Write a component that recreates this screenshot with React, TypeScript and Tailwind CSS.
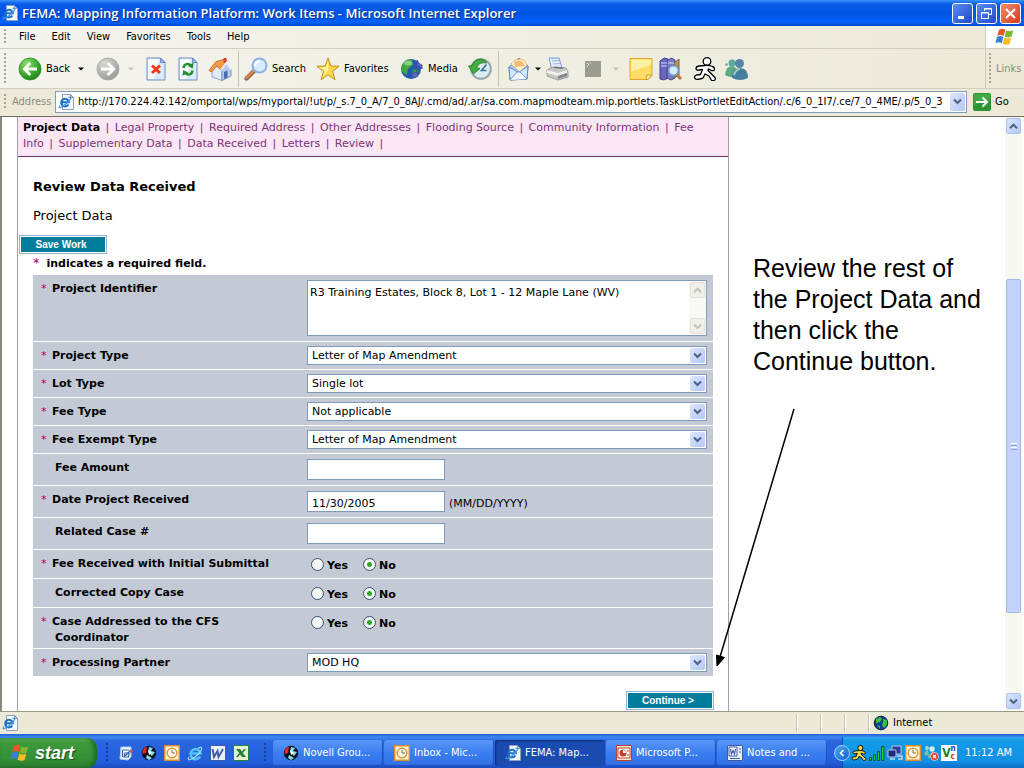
import React from "react";

const tahoma = "font-['DejaVu_Sans_Condensed','DejaVu_Sans',sans-serif]";

type IconProps = { className?: string };

function Chevron({ className = "", up = false, color = "#4d6185" }: { className?: string; up?: boolean; color?: string }) {
  return (
    <svg viewBox="0 0 9 7" className={`h-[7px] w-[9px] ${className}`} aria-hidden="true">
      <path d={up ? "M1 5.2 4.5 1.7 8 5.2" : "M1 1.5 4.5 5 8 1.5"} fill="none" stroke={color} strokeWidth="2" />
    </svg>
  );
}

function Grip({ className = "h-4" }: IconProps) {
  return <span className={`w-[2px] shrink-0 bg-[repeating-linear-gradient(#a5a392_0_2px,transparent_2px_4px)] ${className}`} />;
}

function IePage({ className = "h-4 w-4" }: IconProps) {
  return (
    <svg viewBox="0 0 16 16" className={`shrink-0 ${className}`} aria-hidden="true">
      <path d="M4.5.5h8l3 3v12h-11z" fill="#f4f8fd" stroke="#8fa0b8" />
      <path d="M12.500.5v3h3z" fill="#b9c9e4" stroke="#6482b0" strokeWidth=".7" />
      <path d="M10.300 10.500A3.800 3.800 0 1 1 10.800 8.200H4" fill="none" stroke="#1c6fc0" strokeWidth="2" />
      <path d="M2 11.500C-1.500 16 5 13 9 9s5.500-7 1.500-5.500" fill="none" stroke="#3b98e0" strokeWidth="1.200" />
    </svg>
  );
}

function IeLogo({ className = "h-4 w-4" }: IconProps) {
  return (
    <svg viewBox="0 0 16 16" className={`shrink-0 ${className}`} aria-hidden="true">
      <path d="M13 11.500A5 5 0 1 1 13.500 8.500H4" fill="none" stroke="#55c0f7" strokeWidth="2.600" />
      <path d="M2 12c-3 5 4 2.500 9-2.500s5-9 0-6" fill="none" stroke="#9fe0ff" strokeWidth="1.200" />
    </svg>
  );
}

function WindowsFlag({ className = "h-5 w-5" }: IconProps) {
  return (
    <svg viewBox="0 0 20 18" className={`shrink-0 ${className}`} aria-hidden="true">
      <path d="M4 1.800Q7.500-.3 10.300 1.800L8.700 8Q5.500 6 2.300 7.900z" fill="#e8562a" />
      <path d="M11.200 2.300Q14.500 4.300 18.300 2.300L16.600 8.600Q13 10.500 9.600 8.500z" fill="#78b832" />
      <path d="M2 8.900Q5.300 7 8.400 9L6.800 15.200Q3.500 13.200.4 15.200z" fill="#3c7fd8" />
      <path d="M9.300 9.500Q12.700 11.500 16.300 9.600L14.600 16Q11 17.800 7.700 15.800z" fill="#f6bd22" />
    </svg>
  );
}

function RoundArrow({ kind }: { kind: "back" | "forward" }) {
  const back = kind === "back";
  return (
    <svg viewBox="0 0 24 24" className="h-6 w-6 shrink-0" aria-hidden="true">
      <defs>
        <radialGradient id={`round-${kind}`} cx=".35" cy=".25" r=".85">
          <stop offset="0" stopColor={back ? "#8ade70" : "#d8d8d4"} />
          <stop offset=".55" stopColor={back ? "#3fac31" : "#b4b4b1"} />
          <stop offset="1" stopColor={back ? "#1c7a16" : "#949492"} />
        </radialGradient>
      </defs>
      <circle cx="12" cy="12" r="11" fill={`url(#round-${kind})`} stroke={back ? "#2d8a25" : "#a3a3a0"} strokeWidth=".8" />
      <path
        d={back ? "M19 12H7M12.300 6 6.300 12l6 6" : "M5 12h12M11.700 6l6 6-6 6"}
        fill="none" stroke="#fff" strokeWidth="2.800"
      />
    </svg>
  );
}

function PageIcon({ kind }: { kind: "stop" | "refresh" }) {
  return (
    <svg viewBox="0 0 20 24" className="h-6 w-5 shrink-0" aria-hidden="true">
      <path d="M1 1h13.500L19 5.500V23H1z" fill="#dce8fb" stroke="#6f8fc8" />
      <path d="M2 2h11l-5 20H2z" fill="#f7faff" />
      <path d="M14.500 1v4.500H19z" fill="#9cb6e2" stroke="#5575b0" strokeWidth=".7" />
      {kind === "stop" ? (
        <path d="m6 8.500 8 7.500m0-7.500L6 16" stroke="#ee3a18" strokeWidth="3" />
      ) : (
        <g fill="none" stroke="#20902c" strokeWidth="2.400">
          <path d="M5.500 11c.5-4.500 5-5 7.200-2.500" />
          <path d="M14.500 13.500c-.5 4.500-5 5-7.200 2.500" />
          <path d="m15.500 5.500-.6 6-5-2.500z M4.500 19l.6-6 5 2.500z" fill="#20902c" stroke="none" />
        </g>
      )}
    </svg>
  );
}

function HomeIcon() {
  return (
    <svg viewBox="0 0 24 24" className="h-6 w-6 shrink-0" aria-hidden="true">
      <path d="M4 13v7l10 3.500V12L8 6z" fill="#dfe9f8" stroke="#7b96c4" strokeWidth=".8" />
      <path d="M14 13 18.500 6l4.500 6.500V19l-9 4.500z" fill="#b7cbec" stroke="#6481b5" strokeWidth=".8" />
      <path d="M1 13.500 8 4.500l10-2.500 1 3-6 8-4-4-5.500 6z" fill="#f49a45" stroke="#c0611d" strokeWidth=".8" />
      <path d="M15.500 1h3v5h-3z" fill="#d64b2c" />
      <path d="m16 15 3.500-1.500v7L16 22z" fill="#4a69a8" />
      <path d="m13 13.500 5.500-8 4.800 7" fill="none" stroke="#edf3fc" strokeWidth="1.800" />
    </svg>
  );
}

function SearchIcon() {
  return (
    <svg viewBox="0 0 24 24" className="h-6 w-6 shrink-0" aria-hidden="true">
      <path d="m2.500 21.500 8-8" stroke="#8a5a3c" strokeWidth="4.200" strokeLinecap="round" />
      <path d="m2.500 21 8-8" stroke="#d98b57" strokeWidth="2.400" strokeLinecap="round" />
      <circle cx="15.500" cy="8.500" r="7" fill="#d5ebff" stroke="#8fb0e4" strokeWidth="2" />
      <path d="M11 9q0-5 5-5" fill="none" stroke="#fff" strokeWidth="2" />
    </svg>
  );
}

function StarIcon() {
  return (
    <svg viewBox="0 0 24 24" className="h-6 w-6 shrink-0" aria-hidden="true">
      <path d="m12 1 2.800 8 8.400.3-6.700 5 2.500 8.400-7-4.800-7 4.800 2.500-8.400-6.700-5L9.200 9z" fill="#fcd94d" stroke="#c58e18" strokeLinejoin="round" />
      <path d="m12 3-2 7-7 .5L9 14l-2 6 5-7z" fill="#fff3a4" />
    </svg>
  );
}

function MediaIcon() {
  return (
    <svg viewBox="0 0 24 24" className="h-6 w-6 shrink-0" aria-hidden="true">
      <circle cx="11" cy="12" r="10" fill="#2458b4" />
      <path d="M2 8Q6 1 12 3l1 5-5 4-1 6Q1 16 1.500 10z" fill="#3faa39" />
      <path d="M12 13q5-3 7 1-1 6-6 7z" fill="#2f9060" />
      <ellipse cx="8" cy="6" rx="4" ry="2.500" fill="#b4e8bb" opacity=".6" />
      <path d="M17 17V3q1 4 5 5v4q-2-3-4-3" fill="#686cc8" stroke="#3b3e96" strokeWidth=".8" />
      <ellipse cx="15" cy="18" rx="3" ry="2.300" fill="#686cc8" stroke="#3b3e96" strokeWidth=".6" />
    </svg>
  );
}

function HistoryIcon() {
  return (
    <svg viewBox="0 0 24 24" className="h-6 w-6 shrink-0" aria-hidden="true">
      <circle cx="13" cy="12" r="9.800" fill="#dcebf2" stroke="#98a7ae" strokeWidth="2" />
      <path d="M17 3.500Q8-1 4 8.500L.5 9 5.500 17l6.500-5.500-3.500-1Q11 4.500 19 6z" fill="#41ad3e" stroke="#24772a" strokeWidth=".8" />
      <path d="m18.500 7.500-5 6h5" fill="none" stroke="#39749d" strokeWidth="1.700" />
    </svg>
  );
}

function MailIcon() {
  return (
    <svg viewBox="0 0 24 24" className="h-6 w-6 shrink-0" aria-hidden="true">
      <path d="M2 10 12 1l9 8-1 13-17 1z" fill="#a7c6f0" stroke="#6487c5" />
      <path d="m4 7 4-4q6-2 9 0l3 5-7 7z" fill="#fff1d5" stroke="#dfa95a" strokeWidth=".8" />
      <path d="M7 5q5-3 9 0l2 4-10 1z" fill="#f4bd76" />
      <path d="m2 10 9.500 5.500L21 9l-1 13-17 1z" fill="#d5e7fd" stroke="#6487c5" />
      <path d="m3 23 7-8 3 0 7 7" fill="#eff6ff" stroke="#7998d0" />
    </svg>
  );
}

function PrinterIcon() {
  return (
    <svg viewBox="0 0 24 24" className="h-6 w-6 shrink-0" aria-hidden="true">
      <path d="M4 1h10l3 10-10 2z" fill="#e2eefd" stroke="#7699d2" />
      <path d="m7 4 7-.5M8 7l7-.5" stroke="#9bb4dc" />
      <path d="m2 13 6-3 13 1 2 4v5l-10 3-11-4z" fill="#c7c7c4" stroke="#9a9a9a" />
      <path d="m2 13 11 3 9-3v3l-9 3-11-3z" fill="#efefed" />
      <path d="m8 11 9 1 2-1.500-9-1z" fill="#72777e" />
      <path d="m13 19 9-3v3l-9 3z" fill="#83858a" />
    </svg>
  );
}

function DiscussIcon() {
  return (
    <svg viewBox="0 0 16 16" className="h-4 w-4 shrink-0" aria-hidden="true">
      <path d="M0 0h16v16H0z" fill="#9b9c90" />
      <path d="m2 2 2 2m1-2h1m-4 3h1" stroke="#fff" />
    </svg>
  );
}

function NoteIcon() {
  return (
    <svg viewBox="0 0 24 24" className="h-6 w-6 shrink-0" aria-hidden="true">
      <path d="M1 1.500h22v17l-4 4H1z" fill="#ffdc63" stroke="#e5a62c" />
      <path d="M2 2.500h20v5L2 15z" fill="#fff1a3" />
      <path d="M23 18h-5l-1 4.500h2z" fill="#fff2ae" stroke="#d79729" />
    </svg>
  );
}

function ResearchIcon() {
  return (
    <svg viewBox="0 0 24 24" className="h-6 w-6 shrink-0" aria-hidden="true">
      <path d="m1 4 4-3 4 1v19l-4 2-4-1z" fill="#6667bd" stroke="#40428c" />
      <path d="m8 4 4-3 4 2v18l-4 2-4-2z" fill="#7b7ccb" stroke="#40428c" />
      <path d="m15 6 5-4v16l-5 3z" fill="#b7935a" stroke="#7b6242" />
      <path d="M2 6h6m1 0h6M2 9h6" stroke="#d2d5f3" />
      <path d="m17 17 5 5" stroke="#b8783f" strokeWidth="3" />
      <circle cx="14.500" cy="13.500" r="4.800" fill="#d4ecff" stroke="#6e9cca" strokeWidth="1.500" />
    </svg>
  );
}

function RunningMan({ fill = "#fff", className = "h-6 w-6" }: { fill?: string; className?: string }) {
  return (
    <svg viewBox="0 0 24 24" className={`shrink-0 ${className}`} aria-hidden="true">
      <circle cx="14" cy="4.500" r="3.800" fill={fill} stroke="#000" strokeWidth="1.300" />
      <path
        d="M11.500 8.500 6 9q-3 .5-3 2.500t3 1.500l3.500-.5-2 5-4 .5q-3 1-1.500 3.500 1 1 3 .8L9 21.500q1-.3 1.500-1.500l1.500-3 4 2 2 3.500q1 1.800 3 1t1-3L18.500 17 15 13.500l.5-1.500 3 1.500q3 .5 3-1.500t-2-2.500l-3-1Q14 8 11.500 8.500z"
        fill={fill} stroke="#000" strokeWidth="1.300" strokeLinejoin="round"
      />
    </svg>
  );
}

function PeopleIcon({ className = "h-6 w-6" }: IconProps) {
  return (
    <svg viewBox="0 0 24 24" className={`shrink-0 ${className}`} aria-hidden="true">
      <circle cx="8" cy="6" r="3.500" fill="#60a89f" />
      <path d="M1 18q1-9 7-9 5 0 6 9-7 4-13 0z" fill="#5eaa83" />
      <circle cx="15.500" cy="6.500" r="4.500" fill="#5388a7" />
      <path d="M8 21q0-10 8-10t8 10q-8 4-16 0z" fill="#467f9e" />
      <path d="M10 18q2-6 6-6" fill="none" stroke="#a1d1be" strokeWidth="2" />
      <circle cx="2.500" cy="7.500" r="1.500" fill="#77b9aa" />
    </svg>
  );
}

function GlobeIcon({ red = false }: { red?: boolean }) {
  return (
    <svg viewBox="0 0 16 16" className="h-4 w-4 shrink-0" aria-hidden="true">
      <circle cx="8" cy="8" r="6.800" fill={red ? "#101018" : "#153b9b"} stroke="#071c38" />
      {red ? (
        <g>
          <path d="M1.500 9Q1 3 6 1.500L5 8z" fill="#ed2424" />
          <path d="m8 2 4 1-2 3 4 1-3 4-4-4zM6 10l5 3-3 2-3-2z" fill="#87dce8" />
          <path d="m7 5 4 3-3 2z" fill="#fff" />
        </g>
      ) : (
        <path d="m3 4 4-2 2 2-2 3-4 1zM10 4l4 1v5l-3 3-2-3 1-3zM4 10l3 1v3z" fill="#39bf3c" />
      )}
    </svg>
  );
}

function OutlookIcon() {
  return (
    <svg viewBox="0 0 16 16" className="h-4 w-4 shrink-0" aria-hidden="true">
      <path d="M.7.700h14.600v14.600H.700z" fill="#fff6dc" stroke="#df8d28" strokeWidth="1.500" />
      <circle cx="8" cy="8" r="4.800" fill="#fffaf0" stroke="#d79a36" strokeWidth="1.500" />
      <path d="M8 5v3h3" fill="none" stroke="#8d642d" />
    </svg>
  );
}

function OfficeIcon({ kind }: { kind: "word" | "excel" | "ppt" | "doc" }) {
  const color = kind === "excel" ? "#278135" : kind === "ppt" ? "#bd3f28" : "#3f59ac";
  return (
    <svg viewBox="0 0 16 16" className="h-4 w-4 shrink-0" aria-hidden="true">
      <path d="M.5.5h15v15H.5z" fill={kind === "excel" ? "#e3f0d4" : kind === "ppt" ? "#f9e4d8" : "#e9f0fb"} stroke={color} />
      {kind === "excel" && <path d="M3 4h4l2 2.500L11 4h2L9.800 8l3.200 4H9L7 9.500 5 12H3l3.200-4z" fill={color} />}
      {kind === "word" && <path d="m2.500 4 1.500 8 3.500-6 1 6L13 4" fill="none" stroke={color} strokeWidth="1.900" />}
      {kind === "doc" && (
        <g>
          <path d="M2 2h8v9H2z" fill="#fff" stroke={color} />
          <path d="m3.500 4 1 5L6 5.500 7.500 9l1-5" fill="none" stroke={color} strokeWidth="1.200" />
          <path d="M12 4h2M12 7h2M3 13.500h10" stroke={color} />
        </g>
      )}
      {kind === "ppt" && (
        <g>
          <path d="M2 3h12v10H2z" fill="#fff" stroke={color} />
          <circle cx="7" cy="8" r="3.500" fill={color} />
          <path d="M7 8V5a3 3 0 0 1 3 3z" fill="#fff" />
          <path d="M12 5v2m0 2v2" stroke={color} />
        </g>
      )}
    </svg>
  );
}

function DesktopIcon() {
  return (
    <svg viewBox="0 0 16 16" className="h-4 w-4 shrink-0" aria-hidden="true">
      <path d="m3 2 10 0 0 10-3 3-8-1z" fill="#f2f8ff" stroke="#a9cdf2" />
      <path d="M5 5h6M4.500 5v7M7 8h4l-.5 4H6z" fill="none" stroke="#32659e" strokeWidth="1.200" />
      <path d="m7 11 6-6" stroke="#32659e" strokeWidth="1.200" />
      <path d="m12 5 3.500 1-3 2.500z" fill="#e8502c" />
    </svg>
  );
}

function SignalIcon() {
  return (
    <svg viewBox="0 0 16 16" className="h-4 w-4 shrink-0" aria-hidden="true">
      <path d="M.5 12.500h2v3h-2zM4.500 9.500h2v6h-2zM8.500 6.500h2v9h-2zM12.500 1.500h2.500v14h-2.500z" fill="#29c83a" stroke="#0e5628" />
    </svg>
  );
}

function NetworkIcon() {
  return (
    <svg viewBox="0 0 16 16" className="h-4 w-4 shrink-0" aria-hidden="true">
      <path d="M5 1h9v8H5z" fill="#2b3c9c" stroke="#b6c3e5" />
      <path d="M1 5h8v7H1z" fill="#1d2d7c" stroke="#b6c3e5" />
      <path d="M3 14h5M10 11h5v3h-4" fill="none" stroke="#c8d2ea" strokeWidth="1.500" />
    </svg>
  );
}

function OfflineIcon() {
  return (
    <svg viewBox="0 0 16 16" className="h-4 w-4 shrink-0" aria-hidden="true">
      <circle cx="4" cy="3" r="2" fill="#9edcc8" />
      <circle cx="9" cy="4" r="2.700" fill="#d6f1ec" />
      <path d="M1 10q1-5 4-5l1 6zM5 13q1-6 5-6t4 6z" fill="#78bda7" />
      <circle cx="11.500" cy="11.500" r="4" fill="#e43a22" stroke="#fff" strokeWidth=".6" />
      <path d="m10 10 3 3m0-3-3 3" stroke="#fff" strokeWidth="1.200" />
    </svg>
  );
}

function CaretDown({ muted = false }: { muted?: boolean }) {
  return (
    <svg viewBox="0 0 6 4" className="h-1 w-[6px] shrink-0" aria-hidden="true">
      <path d="M0 .5h6L3 3.500z" fill={muted ? "#c4c2b4" : "#000"} />
    </svg>
  );
}

function ToolButton({ className, label, children, text }: { className: string; label: string; children: React.ReactNode; text?: string }) {
  return (
    <button type="button" aria-label={label} className={`flex shrink-0 items-center gap-1 whitespace-nowrap ${className}`}>
      {children}
      {text}
    </button>
  );
}

function Toolbar() {
  return (
    <div className="flex h-10 shrink-0 items-center border-b border-[#d0cebf] bg-gradient-to-r from-[#f4f4ee] to-[#ece9d8] pl-1">
      <Grip className="mr-3 h-8" />
      <ToolButton label="Back" className="w-[78px]" text="Back">
        <RoundArrow kind="back" />
        <span className="order-last ml-1 flex"><CaretDown /></span>
      </ToolButton>
      <ToolButton label="Forward" className="w-[50px]">
        <RoundArrow kind="forward" />
        <span className="ml-1 flex"><CaretDown muted /></span>
      </ToolButton>
      <ToolButton label="Stop" className="w-8"><PageIcon kind="stop" /></ToolButton>
      <ToolButton label="Refresh" className="w-[30px]"><PageIcon kind="refresh" /></ToolButton>
      <ToolButton label="Home" className="w-[30px]"><HomeIcon /></ToolButton>
      <span className="mr-[5px] h-9 w-px shrink-0 bg-[#c4c2b2]" />
      <ToolButton label="Search" className="w-[72px]" text="Search"><SearchIcon /></ToolButton>
      <ToolButton label="Favorites" className="w-[84px]" text="Favorites"><StarIcon /></ToolButton>
      <ToolButton label="Media" className="w-[68px]" text="Media"><MediaIcon /></ToolButton>
      <ToolButton label="History" className="w-[30px]"><HistoryIcon /></ToolButton>
      <span className="mr-2 h-9 w-px shrink-0 bg-[#c4c2b2]" />
      <ToolButton label="Mail" className="w-[38px]"><MailIcon /><CaretDown /></ToolButton>
      <ToolButton label="Print" className="w-10"><PrinterIcon /></ToolButton>
      <ToolButton label="Discuss" className="w-11">
        <DiscussIcon />
        <span className="ml-2 flex"><CaretDown muted /></span>
      </ToolButton>
      <ToolButton label="Notes" className="w-[30px]"><NoteIcon /></ToolButton>
      <ToolButton label="Research" className="w-[34px]"><ResearchIcon /></ToolButton>
      <ToolButton label="Instant messenger" className="w-[31px]"><RunningMan /></ToolButton>
      <ToolButton label="Contacts" className="w-6"><PeopleIcon /></ToolButton>
      <div className="ml-auto flex h-full w-[39px] items-center gap-[5px] border-l border-[#d0cebf] pl-[3px] text-[#8d8b7e]">
        <Grip className="h-8" />
        <span>Links</span>
      </div>
    </div>
  );
}

const tabs = ["Legal Property", "Required Address", "Other Addresses", "Flooding Source", "Community Information", "Fee Info", "Supplementary Data", "Data Received", "Letters", "Review"];

function Row({ label, required = false, htmlFor, height, top = "pt-[6px]", children }: {
  label: React.ReactNode; required?: boolean; htmlFor?: string; height: string; top?: string; children: React.ReactNode;
}) {
  const Tag = htmlFor ? "label" : "div";
  return (
    <div className={`grid grid-cols-[274px_minmax(0,1fr)] border-b border-white bg-[#c3cad6] last:border-b-0 ${height}`}>
      <Tag htmlFor={htmlFor} className="flex pt-[6px] pl-2 text-[11px] leading-4 font-bold">
        <span className={required ? "w-[11px] shrink-0 font-normal text-[#b4004c]" : "w-[14px] shrink-0"}>{required ? "*" : ""}</span>
        <span>{label}</span>
      </Tag>
      <div className={`pr-[6px] ${top}`}>{children}</div>
    </div>
  );
}

function SelectBox({ id, value }: { id: string; value: string }) {
  return (
    <div className="relative">
      <select id={id} defaultValue={value} className="block h-[19px] w-full appearance-none border border-[#7f9db9] bg-white pr-5 pl-1 text-[11px] leading-4 outline-none">
        <option>{value}</option>
      </select>
      <span className="pointer-events-none absolute top-[2px] right-[2px] flex h-[15px] w-[15px] items-center justify-center rounded-[2px] bg-gradient-to-br from-[#dbe5fe] to-[#b4c8f6]">
        <Chevron />
      </span>
    </div>
  );
}

function TextBox({ id, value = "" }: { id: string; value?: string }) {
  return <input id={id} defaultValue={value} className="h-[21px] w-[138px] border border-[#7f9db9] bg-white px-1 pt-1 text-[11px] leading-4 outline-none" />;
}

function YesNo({ name }: { name: string }) {
  const radio = "m-0 h-[13px] w-[13px] appearance-none rounded-full border border-[#2c5578] bg-[#f7f7f5] checked:bg-[radial-gradient(circle,#2ca62a_0_2px,#f7f7f5_3px)]";
  return (
    <div className="flex gap-[15px] pl-1 text-[11px] leading-4 font-bold">
      <label className="flex items-start gap-[3px]"><input type="radio" name={name} className={radio} /><span>Yes</span></label>
      <label className="flex items-start gap-[3px]"><input type="radio" name={name} defaultChecked className={radio} /><span>No</span></label>
    </div>
  );
}

function ProjectForm() {
  return (
    <form className="mr-[15px] ml-[15px] max-w-[680px]">
      <Row label="Project Identifier" required htmlFor="identifier" height="min-h-[67px]" top="pt-[5px]">
        <div className="flex h-14 border border-[#7f9db9] bg-white">
          <textarea id="identifier" defaultValue="R3 Training Estates, Block 8, Lot 1 - 12 Maple Lane (WV)" className="min-w-0 flex-1 resize-none overflow-hidden px-[2px] pt-1 text-[11px] leading-4 outline-none" />
          <div className="flex w-[17px] flex-col justify-between bg-[#f8f8f5] p-px">
            <span className="flex h-4 items-center justify-center rounded-[2px] border border-[#e3e1d8] bg-[#f1efe8]"><Chevron up color="#c6c4b7" /></span>
            <span className="flex h-4 items-center justify-center rounded-[2px] border border-[#e3e1d8] bg-[#f1efe8]"><Chevron color="#c6c4b7" /></span>
          </div>
        </div>
      </Row>
      <Row label="Project Type" required htmlFor="ptype" height="min-h-7" top="pt-1"><SelectBox id="ptype" value="Letter of Map Amendment" /></Row>
      <Row label="Lot Type" required htmlFor="lot" height="min-h-7" top="pt-1"><SelectBox id="lot" value="Single lot" /></Row>
      <Row label="Fee Type" required htmlFor="fee" height="min-h-7" top="pt-1"><SelectBox id="fee" value="Not applicable" /></Row>
      <Row label="Fee Exempt Type" required htmlFor="exempt" height="min-h-7" top="pt-1"><SelectBox id="exempt" value="Letter of Map Amendment" /></Row>
      <Row label="Fee Amount" htmlFor="amount" height="min-h-8" top="pt-[5px]"><TextBox id="amount" /></Row>
      <Row label="Date Project Received" required htmlFor="date" height="min-h-8" top="pt-[5px]">
        <div className="flex items-start gap-1">
          <TextBox id="date" value="11/30/2005" />
          <span className="pt-[5px] text-[11px] leading-4">(MM/DD/YYYY)</span>
        </div>
      </Row>
      <Row label="Related Case #" htmlFor="related" height="min-h-8" top="pt-[5px]"><TextBox id="related" /></Row>
      <Row label="Fee Received with Initial Submittal" required height="min-h-[29px]" top="pt-2"><YesNo name="received" /></Row>
      <Row label="Corrected Copy Case" height="min-h-[29px]" top="pt-2"><YesNo name="corrected" /></Row>
      <Row label={<>Case Addressed to the CFS<br /><span className="pl-[3px]">Coordinator</span></>} required height="min-h-[41px]" top="pt-2"><YesNo name="cfs" /></Row>
      <Row label="Processing Partner" required htmlFor="partner" height="min-h-[27px]" top="pt-1"><SelectBox id="partner" value="MOD HQ" /></Row>
    </form>
  );
}

function Scrollbar() {
  const btn = "flex h-4 shrink-0 items-center justify-center rounded-[2px] border border-[#b0c4f0] bg-gradient-to-br from-[#d8e3fd] to-[#b5c9f7]";
  return (
    <div className="flex w-[17px] shrink-0 flex-col bg-[#f8f8f3] px-px pt-px pb-[2px]">
      <button type="button" aria-label="Scroll up" className={btn}><Chevron up /></button>
      <span className="flex-[146]" />
      <div className="flex flex-[333] flex-col items-center justify-center gap-px rounded-[2px] border border-[#a3b8ea] bg-[#c3d3fd]">
        <span className="h-px w-[6px] bg-white" />
        <span className="h-px w-[6px] bg-[#8ea8e0]" />
        <span className="h-px w-[6px] bg-white" />
        <span className="h-px w-[6px] bg-[#8ea8e0]" />
      </div>
      <span className="flex-[80]" />
      <button type="button" aria-label="Scroll down" className={btn}><Chevron /></button>
    </div>
  );
}

function TaskButton({ icon, children, active = false }: { icon: React.ReactNode; children: React.ReactNode; active?: boolean }) {
  return (
    <button type="button" className={`flex h-[26px] w-[110px] min-w-0 items-center gap-1 rounded-[3px] pl-[10px] whitespace-nowrap text-white ${active ? "bg-[#1b4bb0] shadow-[inset_1px_1px_2px_#0d2c77]" : "bg-gradient-to-b from-[#5a96f5] via-[#3b7ef0] to-[#3170e4] shadow-[inset_-1px_-1px_1px_#1f50bd]"}`}>
      {icon}
      <span>{children}</span>
    </button>
  );
}

function ActionButton({ children }: { children: React.ReactNode }) {
  return (
    <button type="button" className="flex h-[19px] w-[88px] shrink-0 items-center justify-center border border-[#8fb4d4] bg-[#007d9c] pr-1 font-['Liberation_Sans',sans-serif] text-[10px] leading-4 font-bold text-white shadow-[inset_0_0_0_1px_#fff]">
      {children}
    </button>
  );
}

export default function App() {
  const caption = "flex h-[21px] w-[21px] items-center justify-center rounded-[3px] border border-white";
  return (
    <div className={`flex h-screen flex-col overflow-hidden bg-[#ece9d8] text-[11px] leading-4 text-black ${tahoma}`}>
      <header className="flex h-[26px] shrink-0 items-center bg-[linear-gradient(#3a93ff_0,#0a5be8_4px,#0054e3_14px,#0562fb_22px,#0349cd_26px)] pr-[3px] pl-[2px]">
        <IePage />
        <h1 className="ml-1 flex-1 truncate font-['Open_Sans',sans-serif] text-[13px] leading-5 font-semibold text-white [text-shadow:1px_1px_1px_#0a2f8c]">
          FEMA: Mapping Information Platform: Work Items - Microsoft Internet Explorer
        </h1>
        <div className="flex gap-[3px]">
          <button type="button" aria-label="Minimize" className={`${caption} bg-gradient-to-br from-[#5c8cf4] to-[#1c48c8]`}>
            <svg viewBox="0 0 13 13" className="h-[13px] w-[13px]"><path d="M2 9h6v3H2z" fill="#fff" /></svg>
          </button>
          <button type="button" aria-label="Restore" className={`${caption} bg-gradient-to-br from-[#5c8cf4] to-[#1c48c8]`}>
            <svg viewBox="0 0 13 13" className="h-[13px] w-[13px]" fill="none" stroke="#fff"><path d="M4.500 4V1.500h7v6H9M4.500 2h7M1.500 5.500h7v6h-7zM1.500 6h7" /></svg>
          </button>
          <button type="button" aria-label="Close" className={`${caption} bg-gradient-to-br from-[#ef8a6c] to-[#d03a12]`}>
            <svg viewBox="0 0 13 13" className="h-[13px] w-[13px]"><path d="m2 2 9 9m0-9-9 9" stroke="#fff" strokeWidth="2" /></svg>
          </button>
        </div>
      </header>

      <nav className="flex h-[23px] shrink-0 items-center border-b border-[#d0cebf] bg-gradient-to-r from-[#f4f4ee] to-[#ece9d8] pl-1">
        <Grip className="mr-[13px] h-4" />
        <div className="flex gap-4">
          {["File", "Edit", "View", "Favorites", "Tools", "Help"].map((item) => (
            <button type="button" key={item}>{item}</button>
          ))}
        </div>
        <div className="ml-auto flex h-full w-[39px] items-center justify-center border-l border-[#d0cebf] bg-white">
          <WindowsFlag className="h-[18px] w-5" />
        </div>
      </nav>

      <Toolbar />

      <div className="flex h-7 shrink-0 items-center border-b border-[#716f64] pb-[2px] pl-1">
        <Grip className="mr-[6px] h-4" />
        <label htmlFor="address" className="w-[43px] shrink-0 text-[#8d8b7e]">Address</label>
        <div className="flex h-[22px] min-w-0 flex-1 items-center border border-[#7f9db9] bg-white pr-px pl-[2px]">
          <IePage />
          <input id="address" defaultValue="http://170.224.42.142/omportal/wps/myportal/!ut/p/_s.7_0_A/7_0_8AJ/.cmd/ad/.ar/sa.com.mapmodteam.mip.portlets.TaskListPortletEditAction/.c/6_0_1I7/.ce/7_0_4ME/.p/5_0_3" className="ml-1 min-w-0 flex-1 outline-none" />
          <button type="button" aria-label="Address history" className="flex h-[18px] w-[15px] items-center justify-center rounded-[2px] bg-gradient-to-br from-[#dbe5fe] to-[#b4c8f6]"><Chevron /></button>
        </div>
        <button type="button" className="flex w-[57px] shrink-0 items-center gap-1 pl-[6px]">
          <svg viewBox="0 0 18 18" className="h-[18px] w-[18px]" aria-hidden="true">
            <rect width="18" height="18" rx="2" fill="#2c9430" />
            <path d="M1 1h16v6L1 12z" fill="#55b653" opacity=".6" />
            <path d="M3 9h11M9.500 4.500 14 9l-4.500 4.500" fill="none" stroke="#fff" strokeWidth="2" />
          </svg>
          Go
        </button>
      </div>

      <main className="flex min-h-0 flex-1 overflow-hidden border-l-2 border-[#8a887c] bg-white pr-[2px] font-['DejaVu_Sans',sans-serif]">
        <section className="ml-[15px] w-[712px] shrink overflow-hidden border-x border-[#a0a0ac]">
          <nav className="border-b border-[#702e66] bg-[#fbe6f5] pt-[3px] pr-6 pb-1 pl-[5px] text-[11px] leading-4 text-[#7a3574]">
            <a href="#project-data" className="mr-[2px] font-bold text-black">Project Data</a>
            {tabs.map((tab) => (
              <React.Fragment key={tab}> | <a href={`#${tab.toLowerCase().replace(/ /g, "-")}`} className="mx-[2px]">{tab}</a></React.Fragment>
            ))}{" |"}
          </nav>
          <h2 className="mt-5 ml-[15px] text-[13px] leading-5 font-bold">Review Data Received</h2>
          <p className="mt-[9px] ml-[15px] text-[13px] leading-5">Project Data</p>
          <div className="mt-[9px] ml-px flex">
            <ActionButton>Save Work</ActionButton>
          </div>
          <p className="mt-px mb-[3px] ml-[15px] text-[11px] leading-4 font-bold"><span className="mr-[7px] text-[13px] leading-4 font-normal text-[#b4004c]">*</span>indicates a required field.</p>
          <ProjectForm />
          <div className="mt-[15px] mr-[14px] flex justify-end">
            <ActionButton>Continue &gt;</ActionButton>
          </div>
        </section>
        <aside className="relative flex-1 pt-[136px] pl-6 font-['Liberation_Sans',sans-serif] text-[25px] leading-[31px]">
          <p className="whitespace-nowrap">
            Review the rest of<br />the Project Data and<br />then click the<br />Continue button.
          </p>
          <svg viewBox="0 0 84 264" className="absolute top-[290px] left-[-16px] h-[264px] w-[84px]" aria-hidden="true">
            <path d="M81 2 7 250" stroke="#000" strokeWidth="1.500" />
            <path d="m4 259-.5-11 8 2.500z" fill="#000" stroke="#000" />
          </svg>
        </aside>
        <Scrollbar />
      </main>

      <footer className="flex h-[23px] shrink-0 items-center border-t border-[#9a988a] bg-[#ece9d8] pl-[2px]">
        <IePage />
        <div className="ml-auto flex h-full w-[228px] items-center">
          {[0, 1, 2].map((n) => (
            <span key={n} className="h-[18px] w-6 shrink-0 border-l border-[#c9c6b5] shadow-[inset_1px_0_#fff]" />
          ))}
          <span className="flex h-[18px] items-center gap-1 border-l border-[#c9c6b5] pl-1 shadow-[inset_1px_0_#fff]"><GlobeIcon />Internet</span>
        </div>
      </footer>

      <footer className="flex h-[34px] shrink-0 items-end bg-[linear-gradient(#1f5fd0_0,#3f87f2_3px,#2a66e0_7px,#245edb_28px,#1a4bbd_34px)]">
        <button type="button" className="flex h-[30px] w-[97px] shrink-0 items-center gap-[5px] rounded-r-[10px] bg-[linear-gradient(#67b564_0,#3c9a3c_5px,#35913a_20px,#2a7a2e_30px)] pl-[10px] font-['Liberation_Sans',sans-serif] text-lg leading-5 font-bold text-white italic shadow-[inset_-3px_0_4px_#1f6a24] [text-shadow:1px_1px_1px_#184d1a]">
          <WindowsFlag className="h-[18px] w-5" />
          start
        </button>
        <div className="flex h-[30px] items-center gap-[7px] pl-[9px]">
          <span className="mr-[3px] h-5 w-[2px] bg-[repeating-linear-gradient(#153c9e_0_2px,transparent_2px_4px)]" />
          <DesktopIcon />
          <GlobeIcon red />
          <OutlookIcon />
          <IeLogo />
          <OfficeIcon kind="word" />
          <OfficeIcon kind="excel" />
          <span className="ml-2 h-5 w-[2px] bg-[repeating-linear-gradient(#153c9e_0_2px,transparent_2px_4px)]" />
        </div>
        <div className="flex h-[30px] min-w-0 flex-1 items-center gap-px pl-[7px]">
          <TaskButton icon={<GlobeIcon red />}>Novell Grou...</TaskButton>
          <TaskButton icon={<OutlookIcon />}>Inbox - Mic...</TaskButton>
          <TaskButton active icon={<IePage />}>FEMA: Map...</TaskButton>
          <TaskButton icon={<OfficeIcon kind="ppt" />}>Microsoft P...</TaskButton>
          <TaskButton icon={<OfficeIcon kind="doc" />}>Notes and ...</TaskButton>
        </div>
        <div className="relative flex h-[31px] w-[182px] shrink-0 items-center gap-[2px] border-l border-[#0b4fae] bg-[linear-gradient(#2ba9f3_0,#139ae8_5px,#1290e4_24px,#0c70c8_31px)] pl-2 text-white">
          <button type="button" aria-label="Show hidden icons" className="absolute top-[8px] left-[-9px] flex h-4 w-4 items-center justify-center rounded-full border border-[#9fd0f8] bg-gradient-to-br from-[#4fa8f0] to-[#1560cc]">
            <svg viewBox="0 0 8 8" className="h-2 w-2"><path d="M5.500 1 2.500 4l3 3" fill="none" stroke="#fff" strokeWidth="1.600" /></svg>
          </button>
          <RunningMan fill="#f8d94c" className="h-4 w-4" />
          <SignalIcon />
          <NetworkIcon />
          <OutlookIcon />
          <OfflineIcon />
          <span className="flex h-4 w-4 shrink-0 items-center justify-center bg-white text-[12px] leading-4 font-bold text-[#108020]">
            V
            <span className="flex flex-col text-[8px] leading-[8px]">
              <span className="text-[#2038b0]">n</span>
              <span className="text-[#d03020]">c</span>
            </span>
          </span>
          <time className="ml-[6px] whitespace-nowrap">11:12 AM</time>
        </div>
      </footer>
    </div>
  );
}
